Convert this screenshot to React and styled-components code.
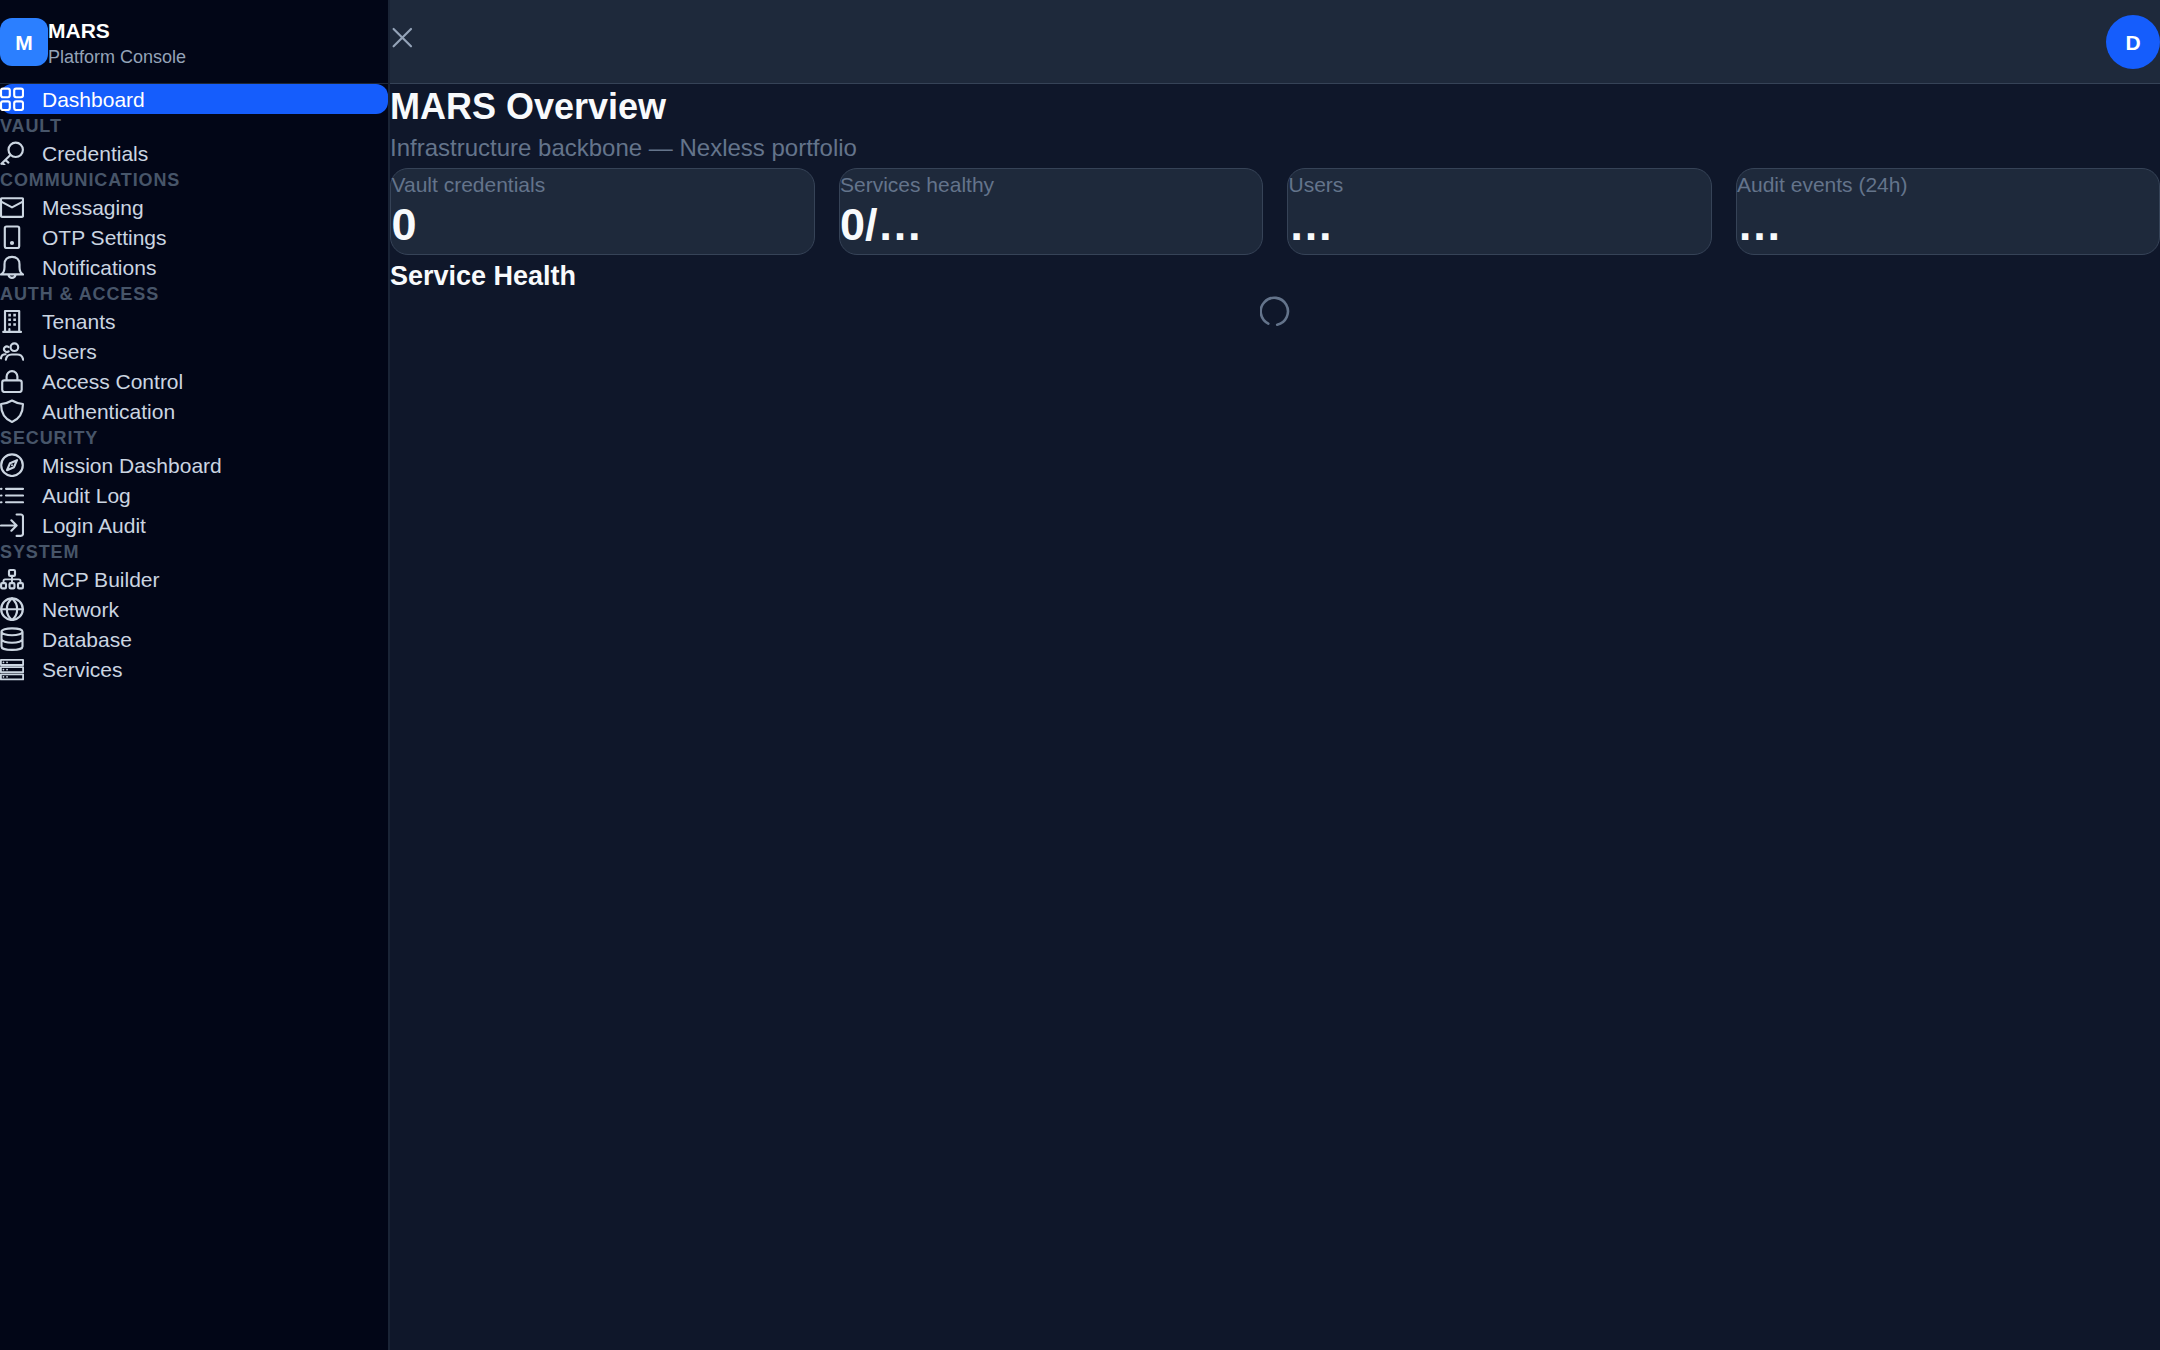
import React from "react";
import styled, { createGlobalStyle } from "styled-components";

const GlobalStyle = createGlobalStyle`
  *, *::before, *::after { box-sizing: border-box; }
  html, body, #root { height: 100%; }
  body {
    margin: 0;
    background: #0f172a;
    color: #f8fafc;
    font-family: "Liberation Sans", Arial, sans-serif;
    overflow: hidden;
  }
  h1, h2, p { margin: 0; }
`;

const Shell = styled.div`
  display: flex;
  height: 100vh;
`;

const Sidebar = styled.aside`
  width: 390px;
  flex: none;
  background: #020617;
  border-right: 2px solid #1a2436;
`;

const Brand = styled.div`
  display: flex;
  align-items: center;
  height: 84px;
  border-bottom: 1px solid #1e293b;
`;

const BrandMark = styled.div`
  display: grid;
  place-items: center;
  width: 48px;
  height: 48px;
  padding-top: 2px;
  border-radius: 12px;
  background: #2b7fff;
  color: #fff;
  font-size: 21px;
  font-weight: 700;
`;

const BrandName = styled.p`
  font-size: 21px;
  line-height: 30px;
  padding-top: 2px;
  margin-bottom: -1px;
  font-weight: 700;
  color: #fff;
`;

const BrandTag = styled.p`
  font-size: 18px;
  line-height: 24px;
  color: #94a3b8;
`;

const SectionTitle = styled.p`
  font-size: 18px;
  line-height: 24px;
  font-weight: 700;
  letter-spacing: 0.9px;
  text-transform: uppercase;
  color: #475569;
`;

const NavItem = styled.div`
  display: flex;
  align-items: center;
  gap: 18px;
  height: 30px;
  border-radius: 12px;
  font-size: 21px;
  line-height: 28px;
  background: ${(p) => (p.$active ? "#155dfc" : "transparent")};
  color: ${(p) => (p.$active ? "#fff" : "#cbd5e1")};
`;

const NavLabel = styled.span`
  padding-top: 2px;
`;

const Glyph = styled.svg`
  display: block;
  flex: none;
  width: ${(p) => p.$size || 24}px;
  height: ${(p) => p.$size || 24}px;
  fill: none;
  stroke: currentColor;
  stroke-width: 2.15;
  stroke-linecap: round;
  stroke-linejoin: round;
`;

const Main = styled.div`
  flex: 1;
  min-width: 0;
`;

const TopBar = styled.header`
  display: flex;
  align-items: center;
  justify-content: space-between;
  height: 84px;
  background: #1e293b;
  border-bottom: 1px solid #364357;
`;

const MenuToggle = styled.button`
  display: block;
  margin: 0 0 9px;
  padding: 0;
  border: 0;
  background: none;
  color: #94a3b8;
`;

const Avatar = styled.div`
  display: grid;
  place-items: center;
  width: 54px;
  height: 54px;
  padding-top: 2px;
  border-radius: 50%;
  background: #155dfc;
  color: #fff;
  font-size: 21px;
  font-weight: 700;
`;

const Title = styled.h1`
  font-size: 36px;
  line-height: 46px;
  font-weight: 700;
`;

const Subtitle = styled.p`
  font-size: 24px;
  line-height: 36px;
  padding-bottom: 2px;
  color: #64748b;
`;

const Stats = styled.div`
  display: grid;
  grid-template-columns: repeat(4, 1fr);
  gap: 24px;
`;

const StatCard = styled.div`
  height: 87px;
  padding-left: 0.5px;
  border: 1px solid #364357;
  border-radius: 18px;
  background: #1e293b;
`;

const StatLabel = styled.p`
  font-size: 21px;
  line-height: 32px;
  color: #64748b;
`;

const StatValue = styled.p`
  font-size: 45px;
  line-height: 48px;
  font-weight: 700;
`;

const SectionHeading = styled.h2`
  font-size: 27px;
  line-height: 42px;
  margin-bottom: -1px;
  font-weight: 700;
`;

const Loading = styled.div`
  display: flex;
  justify-content: center;
  color: #64748b;
`;

const dot = { fill: "currentColor", stroke: "none" };

const icons = {
  grid: (
    <>
      <rect x="1" y="1.6" width="8.800" height="8.600" rx="1.900" />
      <rect x="14.200" y="1.6" width="8.800" height="8.600" rx="1.900" />
      <rect x="1" y="14.4" width="8.800" height="8.600" rx="1.900" />
      <rect x="14.200" y="14.4" width="8.800" height="8.600" rx="1.900" />
    </>
  ),
  key: (
    <>
      <circle cx="15.7" cy="8.8" r="7.2" />
      <path d="M10.400 14.100L1.400 22.800M5.500 19l2.900 2.600M2 22.200l2.400 1.500" />
    </>
  ),
  mail: (
    <>
      <rect x="1" y="3.200" width="22" height="18.600" rx="1" />
      <path d="M1.200 6.600L12 12.400l10.800-5.800" />
    </>
  ),
  mobile: (
    <>
      <rect x="4.800" y="1.500" width="14.400" height="21.500" rx="1.800" />
      <circle cx="12" cy="18" r="2.100" {...dot} />
    </>
  ),
  bell: (
    <path d="M1 19.400h22c-2.500-1.200-3.500-3.600-3.500-7.400V9.400C19.500 4.700 16.600 1.900 12 1.900S4.500 4.700 4.500 9.400V12c0 3.800-1 6.200-3.500 7.400M8.500 20.300c0.500 1.700 1.700 2.600 3.500 2.600s3-0.900 3.500-2.600" />
  ),
  building: (
    <>
      <path d="M5 23V2h14.200v21M3.200 22.900h17.800M9.400 22.600v-2.600" />
      <path
        d="M8.300 4.800h2.600v2.600H8.300zM13.300 4.800h2.600v2.600h-2.600zM8.300 9.500h2.600v2.600H8.300zM13.300 9.500h2.600v2.600h-2.600zM8.300 14.200h2.600v2.600H8.300zM13.300 14.200h2.600v2.600h-2.600z"
        {...dot}
      />
    </>
  ),
  users: (
    <>
      <circle cx="14.400" cy="8.200" r="3.800" />
      <path d="M5.900 20.700c0.400-3.500 2.600-5.200 6-5.200h5.200c3.400 0 5.600 1.700 6 5.200" />
      <path d="M8.600 8a2.800 2.800 0 1 0 0 4.400M1 19.300c0.200-2.700 1.600-4.100 4.500-4.100" />
    </>
  ),
  lock: (
    <>
      <rect x="2.200" y="11.300" width="19.500" height="11.700" rx="2.200" />
      <path d="M6.600 11V7.500a5.300 5.300 0 0 1 10.800 0V11" />
    </>
  ),
  shield: (
    <path d="M12 1.500C8.800 3.400 5 4.700 1.100 5c-0.200 8.300 3.300 14.700 10.900 18C19.600 19.700 23.100 13.300 22.900 5c-3.900-0.300-7.700-1.600-10.900-3.500z" />
  ),
  compass: (
    <>
      <circle cx="12" cy="12.200" r="10.800" />
      <path d="M17 7.200l-3 7-7 3 3-7z" />
      <circle cx="12" cy="12.200" r="1" {...dot} />
    </>
  ),
  list: (
    <path d="M6 5.800h17M6 12.500h17M6 19.200h17M1 5.800h0.500M1 12.500h0.500M1 19.200h0.500" />
  ),
  signIn: (
    <path d="M16.600 1.500h4.200a2.200 2.200 0 0 1 2.200 2.200v17a2.200 2.200 0 0 1-2.200 2.200h-4.200M1 12.500h15.200M11.400 7.300l5.200 5.200-5.200 5.200" />
  ),
  sitemap: (
    <>
      <rect x="9" y="3" width="6" height="5.900" rx="1.200" />
      <rect x="1.100" y="16.100" width="4.900" height="5.200" rx="1.100" />
      <rect x="9.550" y="16.100" width="4.900" height="5.200" rx="1.100" />
      <rect x="18" y="16.100" width="4.900" height="5.200" rx="1.100" />
      <path strokeWidth="1.900" d="M12 9v6.500M3.500 15.500v-1.500a1.600 1.600 0 0 1 1.600-1.600h13.800a1.600 1.600 0 0 1 1.600 1.600v1.500" />
    </>
  ),
  globe: (
    <>
      <circle cx="12" cy="12.200" r="10.800" />
      <path d="M1.200 12.200h21.600M12 1.400c-3.600 3-5.200 6.500-5.200 10.800s1.600 7.800 5.200 10.800c3.600-3 5.200-6.500 5.200-10.800S15.600 4.400 12 1.400z" />
    </>
  ),
  database: (
    <>
      <path d="M1.500 4.700C1.500 2.800 6.200 1.400 12 1.400s10.500 1.400 10.500 3.300S17.800 8.200 12 8.200 1.500 6.600 1.500 4.700zM1.500 4.700v14.700c0 2 4.700 3.500 10.500 3.500s10.500-1.500 10.500-3.500V4.700M1.500 12.100c0 2 4.700 3.600 10.500 3.600s10.500-1.600 10.500-3.600" />
    </>
  ),
  server: (
    <>
      <path
        strokeWidth="1.800"
        d="M0.900 2.900h22.200v5.100H0.900zM0.900 10.100h22.200v5.100H0.900zM0.900 17.300h22.200v5.100H0.900z"
      />
      <path strokeWidth="1.700" d="M3.400 5.400h0.100M7 5.400h0.100M3.400 12.600h0.100M7 12.600h0.100M3.400 19.800h0.100M7 19.800h0.100" />
    </>
  ),
};

const sections = [
  { items: [["Dashboard", "grid"]] },
  { title: "Vault", items: [["Credentials", "key"]] },
  {
    title: "Communications",
    items: [["Messaging", "mail"], ["OTP Settings", "mobile"], ["Notifications", "bell"]],
  },
  {
    title: "Auth & Access",
    items: [["Tenants", "building"], ["Users", "users"], ["Access Control", "lock"], ["Authentication", "shield"]],
  },
  {
    title: "Security",
    items: [["Mission Dashboard", "compass"], ["Audit Log", "list"], ["Login Audit", "signIn"]],
  },
  {
    title: "System",
    items: [["MCP Builder", "sitemap"], ["Network", "globe"], ["Database", "database"], ["Services", "server"]],
  },
];

const stats = [
  ["Vault credentials", "0"],
  ["Services healthy", "0/…"],
  ["Users", "…"],
  ["Audit events (24h)", "…"],
];

export default function App() {
  return (
    <>
      <GlobalStyle />
      <Shell>
        <Sidebar>
          <Brand>
            <BrandMark>M</BrandMark>
            <div>
              <BrandName>MARS</BrandName>
              <BrandTag>Platform Console</BrandTag>
            </div>
          </Brand>
          <nav>
            {sections.map((section, i) => (
              <React.Fragment key={i}>
                {section.title && <SectionTitle>{section.title}</SectionTitle>}
                {section.items.map(([label, icon]) => (
                  <NavItem key={label} $active={label === "Dashboard"}>
                    <Glyph viewBox="0 0 24 24">{icons[icon]}</Glyph>
                    <NavLabel>{label}</NavLabel>
                  </NavItem>
                ))}
              </React.Fragment>
            ))}
          </nav>
        </Sidebar>
        <Main>
          <TopBar>
            <MenuToggle aria-label="Close menu">
              <Glyph viewBox="0 0 24 24">
                <path d="M3.600 3.900l17.400 17.400M21 3.900L3.600 21.300" />
              </Glyph>
            </MenuToggle>
            <Avatar>D</Avatar>
          </TopBar>
          <main>
            <Title>MARS Overview</Title>
            <Subtitle>Infrastructure backbone — Nexless portfolio</Subtitle>
            <Stats>
              {stats.map(([label, value]) => (
                <StatCard key={label}>
                  <StatLabel>{label}</StatLabel>
                  <StatValue>{value}</StatValue>
                </StatCard>
              ))}
            </Stats>
            <SectionHeading>Service Health</SectionHeading>
            <Loading>
              <Glyph viewBox="0 0 30 30" $size={30}>
                <path strokeWidth="2.600" d="M8.300 27.600A13.600 13.600 0 1 1 17.200 28.700" />
              </Glyph>
            </Loading>
          </main>
        </Main>
      </Shell>
    </>
  );
}
